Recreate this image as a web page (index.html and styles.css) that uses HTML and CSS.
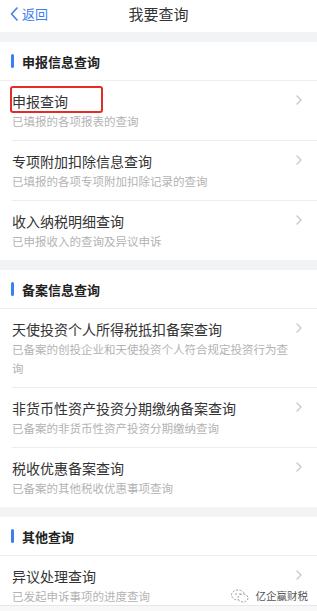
FILE: index.html
```html
<!DOCTYPE html>
<html lang="zh-CN">
<head>
<meta charset="utf-8">
<title>我要查询</title>
<link rel="stylesheet" href="styles.css">
</head>
<body>
<div class="page">
  <header class="topbar">
    <a class="back">
      <svg class="back-icon" width="8" height="14" viewBox="0 0 8 14"><polyline points="7,1 1.5,7 7,13" fill="none" stroke="#3d7ff0" stroke-width="1.6" stroke-linecap="round" stroke-linejoin="round"/></svg>
      <span>返回</span>
    </a>
    <h1 class="title">我要查询</h1>
    <span></span>
  </header>

  <main class="content">
    <section class="section">
      <div class="section-head"><i class="bar"></i><span>申报信息查询</span></div>
      <div class="item marked">
        <div class="texts">
          <div class="item-title">申报查询</div>
          <div class="item-sub">已填报的各项报表的查询</div>
        </div>
        <svg class="chev" width="6" height="10" viewBox="0 0 6 10"><polyline points="1,1 5,5 1,9" fill="none" stroke="#c9c9ce" stroke-width="1.4" stroke-linecap="round" stroke-linejoin="round"/></svg>
        <span class="redbox"></span>
      </div>
      <div class="item">
        <div class="texts">
          <div class="item-title">专项附加扣除信息查询</div>
          <div class="item-sub">已填报的各项专项附加扣除记录的查询</div>
        </div>
        <svg class="chev" width="6" height="10" viewBox="0 0 6 10"><polyline points="1,1 5,5 1,9" fill="none" stroke="#c9c9ce" stroke-width="1.4" stroke-linecap="round" stroke-linejoin="round"/></svg>
      </div>
      <div class="item">
        <div class="texts">
          <div class="item-title">收入纳税明细查询</div>
          <div class="item-sub">已申报收入的查询及异议申诉</div>
        </div>
        <svg class="chev" width="6" height="10" viewBox="0 0 6 10"><polyline points="1,1 5,5 1,9" fill="none" stroke="#c9c9ce" stroke-width="1.4" stroke-linecap="round" stroke-linejoin="round"/></svg>
      </div>
    </section>

    <section class="section">
      <div class="section-head"><i class="bar"></i><span>备案信息查询</span></div>
      <div class="item">
        <div class="texts">
          <div class="item-title">天使投资个人所得税抵扣备案查询</div>
          <div class="item-sub">已备案的创投企业和天使投资个人符合规定投资行为查询</div>
        </div>
        <svg class="chev" width="6" height="10" viewBox="0 0 6 10"><polyline points="1,1 5,5 1,9" fill="none" stroke="#c9c9ce" stroke-width="1.4" stroke-linecap="round" stroke-linejoin="round"/></svg>
      </div>
      <div class="item">
        <div class="texts">
          <div class="item-title">非货币性资产投资分期缴纳备案查询</div>
          <div class="item-sub">已备案的非货币性资产投资分期缴纳查询</div>
        </div>
        <svg class="chev" width="6" height="10" viewBox="0 0 6 10"><polyline points="1,1 5,5 1,9" fill="none" stroke="#c9c9ce" stroke-width="1.4" stroke-linecap="round" stroke-linejoin="round"/></svg>
      </div>
      <div class="item">
        <div class="texts">
          <div class="item-title">税收优惠备案查询</div>
          <div class="item-sub">已备案的其他税收优惠事项查询</div>
        </div>
        <svg class="chev" width="6" height="10" viewBox="0 0 6 10"><polyline points="1,1 5,5 1,9" fill="none" stroke="#c9c9ce" stroke-width="1.4" stroke-linecap="round" stroke-linejoin="round"/></svg>
      </div>
    </section>

    <section class="section">
      <div class="section-head"><i class="bar"></i><span>其他查询</span></div>
      <div class="item">
        <div class="texts">
          <div class="item-title">异议处理查询</div>
          <div class="item-sub">已发起申诉事项的进度查询</div>
        </div>
        <svg class="chev" width="6" height="10" viewBox="0 0 6 10"><polyline points="1,1 5,5 1,9" fill="none" stroke="#c9c9ce" stroke-width="1.4" stroke-linecap="round" stroke-linejoin="round"/></svg>
      </div>
    </section>
  </main>
  <footer class="footer"></footer>

  <div class="watermark">
    <svg class="wm-icon" width="20" height="16" viewBox="0 0 20 16">
      <ellipse cx="8" cy="7" rx="6.5" ry="5" fill="none" stroke="#9a9a9a" stroke-width="1" stroke-dasharray="2 1.5"/>
      <ellipse cx="13" cy="10" rx="5" ry="4" fill="#fff" stroke="#9a9a9a" stroke-width="1" stroke-dasharray="2 1.5"/>
      <circle cx="6" cy="6" r="0.8" fill="#9a9a9a"/>
      <circle cx="10" cy="6" r="0.8" fill="#9a9a9a"/>
    </svg>
    <span class="wm-text">亿企赢财税</span>
  </div>
</div>
</body>
</html>
```

FILE: styles.css
```css
* { box-sizing: border-box; }
html, body { margin: 0; padding: 0; }
body {
  width: 317px;
  height: 611px;
  overflow: hidden;
  background: #f2f3f5;
  font-family: "Noto Sans CJK SC", "Noto Sans", sans-serif;
  color: #333;
}
.page {
  position: relative;
  height: 611px;
  display: flex;
  flex-direction: column;
}
.topbar {
  height: 32px;
  flex: none;
  background: #fff;
  display: grid;
  grid-template-columns: 1fr auto 1fr;
  align-items: center;
}
.back {
  display: flex;
  align-items: center;
  gap: 4px;
  padding-left: 10px;
  color: #3d7ff0;
  font-size: 13px;
  line-height: 18px;
  margin-top: -4px;
}
.back-icon { flex: none; }
.title {
  margin: 0;
  font-size: 15px;
  font-weight: normal;
  color: #333;
  line-height: 20px;
  margin-top: -4px;
}
.content {
  flex: 1;
  overflow: hidden;
  padding-top: 10px;
}
.section {
  background: #fff;
  margin-bottom: 10px;
}
.section-head {
  height: 39px;
  border-bottom: 1px solid #efefef;
  display: flex;
  align-items: center;
  padding-left: 11px;
  font-size: 13px;
  font-weight: bold;
  color: #222;
}
.bar {
  width: 3px;
  height: 14px;
  background: #3d7ff0;
  border-radius: 1.5px;
  margin-right: 8px;
}
.item {
  position: relative;
  margin-left: 12px;
  padding: 10px 15px 9px 0;
  border-bottom: 1px solid #ededed;
  display: flex;
  align-items: flex-start;
  gap: 4px;
}
.item:last-child { border-bottom: none; }
.texts { flex: 1; min-width: 0; }
.item-title {
  font-size: 14px;
  line-height: 20px;
  color: #333;
}
.item-sub {
  margin-top: 1px;
  font-size: 11.5px;
  line-height: 19px;
  color: #b3b3b3;
}
.chev {
  flex: none;
  margin-top: 4px;
}
.redbox {
  position: absolute;
  left: -2px;
  top: 5px;
  width: 93px;
  height: 27px;
  border: 2px solid #e32b28;
  border-radius: 3px;
}
.footer {
  flex: none;
  height: 6px;
  border-top: 1px solid #e8e8e8;
  background: #f8f8f8;
}
.watermark {
  position: absolute;
  right: 9px;
  bottom: 7px;
  display: flex;
  align-items: center;
  gap: 6px;
}
.wm-text {
  font-size: 10.5px;
  line-height: 14px;
  color: #555;
  text-shadow: 0 0 2px #fff, 0 0 2px #fff;
}
```
